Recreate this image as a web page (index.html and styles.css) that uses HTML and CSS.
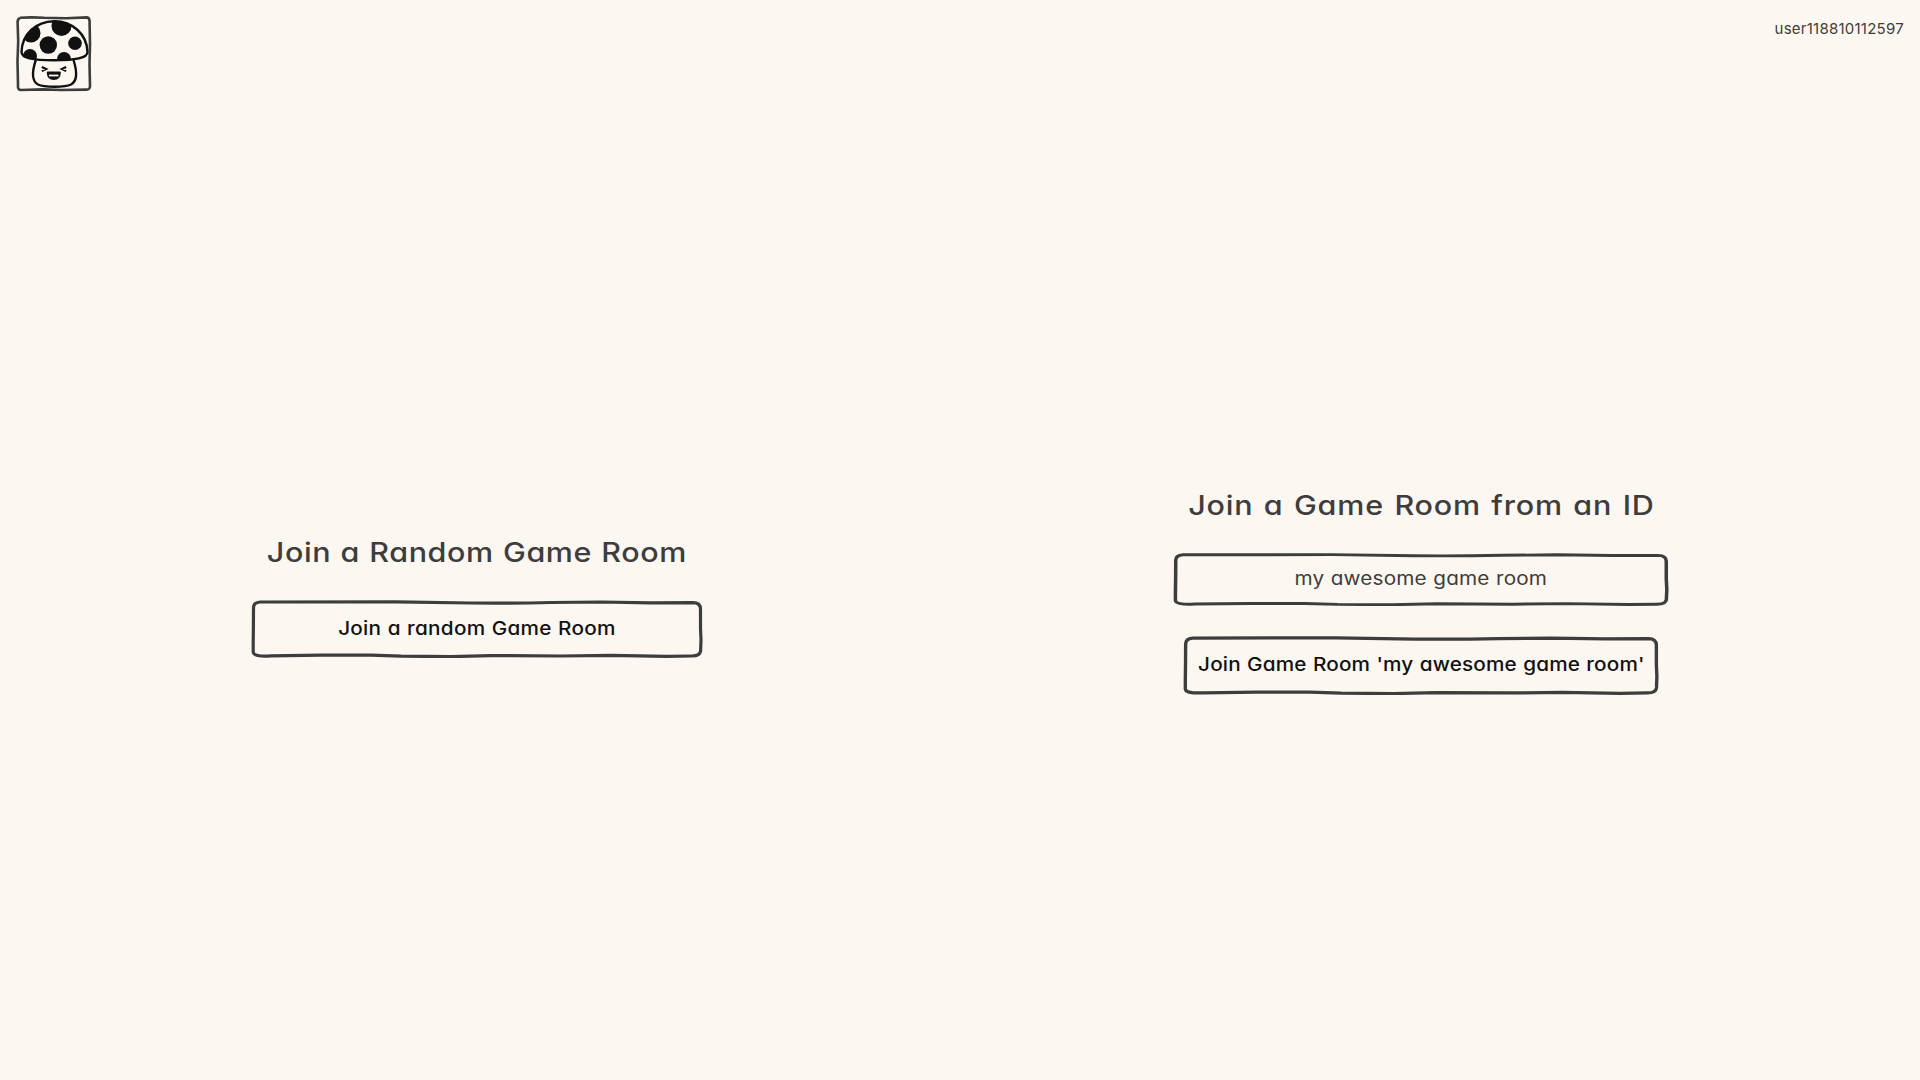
FILE: index.html
```html
<!DOCTYPE html>
<html lang="en">
<head>
<meta charset="utf-8">
<title>Game Room</title>
<link rel="stylesheet" href="styles.css">
</head>
<body>
<svg class="defs" aria-hidden="true">
  <symbol id="frame" viewBox="0 0 452 58" preserveAspectRatio="none">
    <path d="M2.500 8Q2.500 2.500 9 2L145 1.800L220 3Q260 3.400 300 2.500L350 2L400 2.800L442 2.600Q449.500 2.800 449.500 9L449.500 28L450 40L449.600 51Q449 56 441 56L415 56.300L360 55.400L310 56L240 55.600L200 56.600L150 56.200L120 55.200L70 55.200L20 55.800Q2.500 57 2.200 52L2.200 43L2.400 27Z"/>
  </symbol>
</svg>
<header class="topbar">
  <a class="logo" href="#">
    <svg viewBox="0 0 80 80" aria-label="Mushroom">
      <path class="logo-frame" d="M4 1.800Q15 1 28 1.800L50 2.200L71 1.400Q74 1.800 73.600 7L74 28L73.500 48L74 70Q74 74 70 73.600L45 74L27 73.400L5 74Q1.500 74 2 69L1.500 45L2.200 25L1.600 6Q1.600 3 4 1.800"/>
      <clipPath id="cap"><path d="M5.500 36C6 18 20 5.500 38 5.200S71 18 71.500 36C71.500 42 60 44.300 38 44.300S5.500 42 5.500 36Z"/></clipPath>
      <path class="line" d="M19.800 44C15.500 57 15.500 65 22 68.500C28 71.500 49 71.500 55 68.500C61.500 65 61 55 57.500 44"/>
      <g clip-path="url(#cap)">
        <circle cx="15" cy="17" r="9.500"/><circle cx="45.500" cy="10" r="10"/><circle cx="32.300" cy="29" r="8.700"/><circle cx="59" cy="27.300" r="6.800"/><circle cx="14" cy="40" r="7"/><circle cx="48" cy="43" r="7"/>
      </g>
      <path class="line" d="M5.500 36C6 18 20 5.500 38 5.200S71 18 71.500 36C71.500 42 60 44.300 38 44.300S5.500 42 5.500 36Z"/>
      <path class="eye" d="M25.800 51L30 53L25.800 55M50.200 51L46 53L50.200 55"/>
      <path class="mouth" d="M31.800 56.500H43.800Q43.500 63 37.800 63T31.800 56.500Z"/>
      <path class="lip" d="M33 59.500H42.500"/>
    </svg>
  </a>
  <span class="user">user118810112597</span>
</header>
<main class="rooms">
  <section class="room room-random">
    <h2 class="title title-random">Join a Random Game Room</h2>
    <button class="box button random-button"><svg class="frame"><use href="#frame"/></svg><span class="label random-label">Join a random Game Room</span></button>
  </section>
  <section class="room room-id">
    <h2 class="title title-id">Join a Game Room from an ID</h2>
    <div class="box input"><svg class="frame"><use href="#frame"/></svg><span class="label input-label">my awesome game room</span></div>
    <button class="box button id-button"><svg class="frame"><use href="#frame"/></svg><span class="label id-label">Join Game Room 'my awesome game room'</span></button>
  </section>
</main>
</body>
</html>
```
FILE: styles.css
```css
* { box-sizing: border-box; }
body {
  margin: 0;
  height: 1080px;
  overflow: hidden;
  background: #fdf7f1;
  color: #3d3d3d;
  font-family: Inter, "Open Sans", sans-serif;
  font-feature-settings: "cv11" 1, "calt" 0;
  white-space: nowrap;
}
.defs { display: none; }
.topbar {
  height: 100px;
  padding: 16px 16px 0;
  display: flex;
  justify-content: space-between;
  align-items: flex-start;
}
.logo { width: 80px; height: 80px; }
.logo svg { display: block; width: 80px; height: 80px; fill: #111; }
.logo .logo-frame { fill: none; stroke: #3d3d3d; stroke-width: 2.6; }
.logo .line { fill: none; stroke: #111; stroke-width: 2.4; }
.logo .eye { fill: none; stroke: #111; stroke-width: 2.3; }
.logo .mouth { fill: #111; stroke: #111; stroke-width: 2.2; stroke-linejoin: round; }
.logo .lip { stroke: #fdf7f1; stroke-width: 1.8; }
.user { font-size: 15px; line-height: 26px; letter-spacing: 0.25px; }
.rooms {
  display: grid;
  grid-template-columns: 944px 944px;
  padding-left: 5px;
}
.room { display: flex; flex-direction: column; align-items: center; }
.room-random { padding-top: 433px; }
.room-id { padding-top: 386px; }
.title {
  margin: 0;
  font-size: 27px;
  line-height: 40px;
  font-weight: 500;
  letter-spacing: 0.5px;
  word-spacing: 0.6px;
  transform: scaleX(1.13);
}
.title-id { letter-spacing: 0.7px; word-spacing: 1.4px; }
.box {
  position: relative;
  display: flex;
  align-items: center;
  justify-content: center;
  padding: 0 0 2px;
  border: 0;
  background: none;
  font: inherit;
  font-feature-settings: inherit;
}
.label { transform: scaleX(1.12); }
.random-label { letter-spacing: 0.25px; word-spacing: 0.45px; }
.input-label { letter-spacing: 0.15px; word-spacing: 0.4px; }
.id-label { letter-spacing: 0.15px; word-spacing: 0.5px; }
.frame {
  position: absolute;
  inset: 0;
  width: 100%;
  height: 100%;
  fill: none;
  stroke: #3d3d3d;
  stroke-width: 3.2;
  stroke-linejoin: round;
}
.button { height: 58px; color: #111; font-size: 18.5px; font-weight: 500; }
.random-button { width: 452px; margin-top: 27px; }
.input { width: 496px; height: 53px; margin-top: 27px; padding-bottom: 4px; font-size: 18.5px; font-weight: 400; }
.id-button { width: 476px; height: 59px; margin-top: 30px; padding-bottom: 4px; }
```
